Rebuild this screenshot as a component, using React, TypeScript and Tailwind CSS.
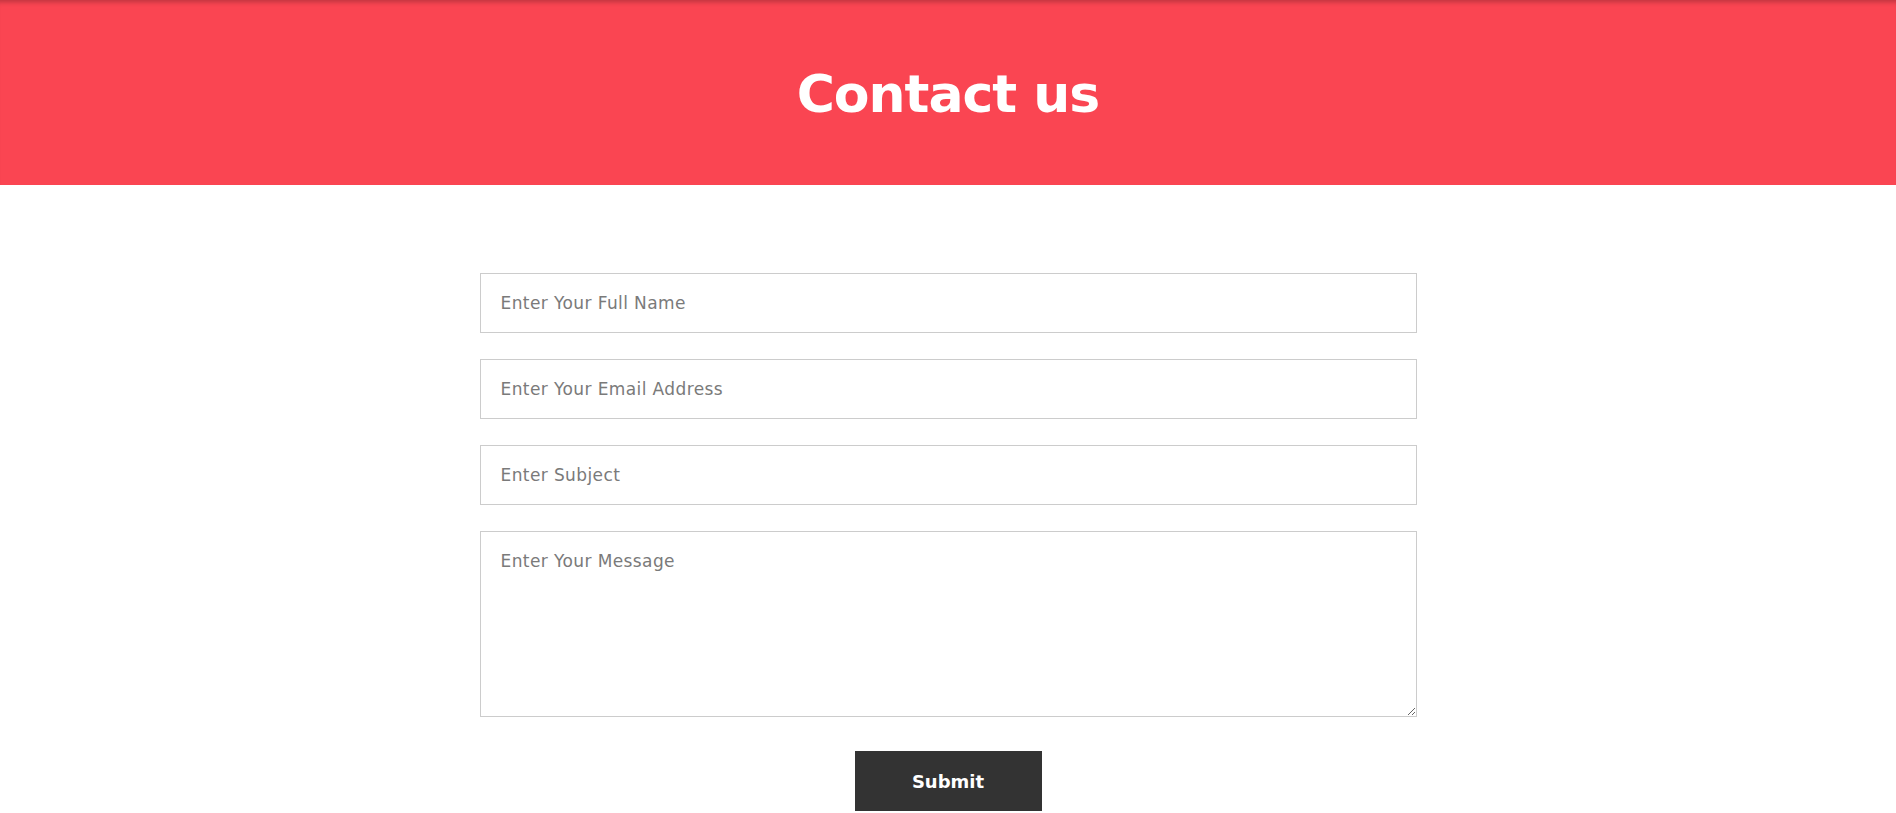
export default function App() {
  const fields = [
    "Enter Your Full Name",
    "Enter Your Email Address",
    "Enter Subject",
  ];

  return (
    <div className="min-h-screen bg-white font-['DejaVu_Sans',sans-serif]">
      <header className="h-[185px] bg-[#fa4552] shadow-[inset_0_6px_5px_-4px_rgba(0,0,0,0.25)] flex items-center justify-center">
        <h1 className="text-white text-[52px] font-bold tracking-[-1px] leading-none pt-[2px]">
          Contact us
        </h1>
      </header>

      <form className="w-[937px] mx-auto mt-[88px] flex flex-col gap-[26px]">
        {fields.map((f) => (
          <input
            key={f}
            type="text"
            placeholder={f}
            className="h-[60px] w-full border border-[#cccccc] px-5 text-[17px] tracking-[0.4px] text-[#333] placeholder:text-[#7a7a7a] outline-none"
          />
        ))}
        <textarea
          placeholder="Enter Your Message"
          className="h-[186px] w-full border border-[#cccccc] px-5 pt-[17px] text-[17px] tracking-[0.4px] text-[#333] placeholder:text-[#7a7a7a] outline-none"
        />
        <div className="flex justify-center mt-[8px]">
          <button
            type="button"
            className="w-[187px] h-[60px] bg-[#333333] text-white text-[18px] font-bold"
          >
            Submit
          </button>
        </div>
      </form>
    </div>
  );
}
